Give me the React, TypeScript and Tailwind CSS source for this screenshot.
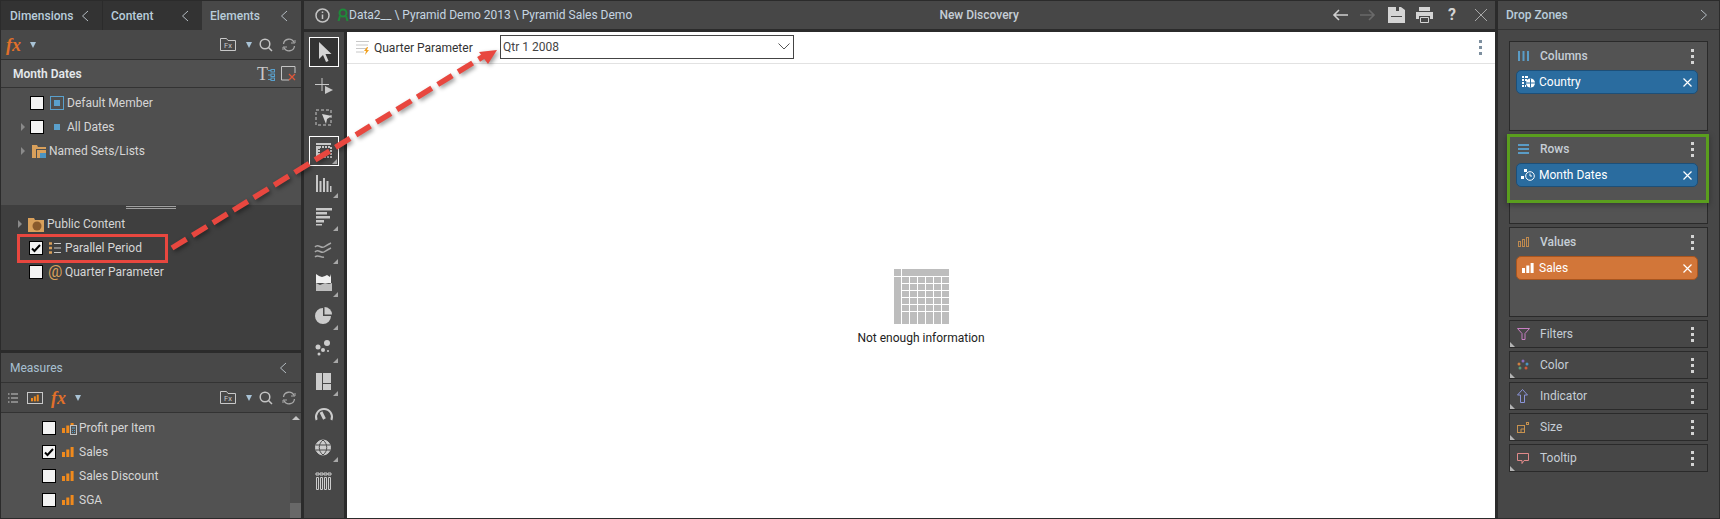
import type { ReactNode } from "react";

const Chevron = ({ right = false }: { right?: boolean }) => (
  <svg width="8" height="12" viewBox="0 0 8 12" fill="none" stroke="#b4bcc2" strokeWidth="1">
    <path d={right ? "M1 1l5.5 5L1 11" : "M7 1L1.5 6 7 11"} />
  </svg>
);

const Caret = () => <span className="block w-0 h-0 border-x-[3.5px] border-x-transparent border-t-[6px] border-t-[#a9c3d6]" />;

const TreeArrow = () => <span className="block w-0 h-0 border-y-[4px] border-y-transparent border-l-[4px] border-l-[#8a8a8a]" />;

const Check = ({ on = false }: { on?: boolean }) => (
  <span className="flex items-center justify-center w-[14px] h-[14px] shrink-0 bg-[#f2f2f2] border border-black">
    {on && (
      <svg width="10" height="10" viewBox="0 0 10 10" fill="none" stroke="#000" strokeWidth="2">
        <path d="M1 5.5l2.5 2.5L9 2" />
      </svg>
    )}
  </span>
);

const FolderFx = () => (
  <svg width="16" height="13" viewBox="0 0 16 13" fill="none" className="block">
    <path d="M.5 12.500V.5h6l1.500 2h7.500v10z" stroke="#c8c8c8" />
    <text x="4" y="10" fontSize="7.500" fill="#c8c8c8" fontFamily="Roboto, sans-serif">Fx</text>
  </svg>
);

const Search = () => (
  <svg width="14" height="14" viewBox="0 0 14 14" fill="none" stroke="#c4c4c4" strokeWidth="1.5">
    <circle cx="6" cy="6" r="4.8" />
    <path d="M9.5 9.5L13 13" />
  </svg>
);

const Refresh = () => (
  <svg width="14" height="14" viewBox="0 0 14 14" fill="none" stroke="#a8a8a8" strokeWidth="1.3">
    <path d="M1.500 6A5.500 5.500 0 0 1 12 4.500M12.500 8A5.500 5.500 0 0 1 2 9.500" />
    <path d="M9 5h4V2M5 9H1v3" strokeWidth="1" />
  </svg>
);

const Fx = () => (
  <span className="text-[18px] leading-none italic font-bold text-[#e0702a] [font-family:'Liberation_Serif',serif]">fx</span>
);

const Bars = ({ color = "#f08a1d", size = 12 }: { color?: string; size?: number }) => (
  <svg width={size} height={size} viewBox="0 0 12 12" fill={color}>
    <rect x="0" y="6" width="3" height="5" />
    <rect x="4.3" y="3.5" width="3" height="7.5" />
    <rect x="8.6" y="1" width="3" height="10" />
  </svg>
);

const ListIcon = ({ size = 12 }: { size?: number }) => (
  <svg width={size} height={size} viewBox="0 0 12 12" fill="none">
    <path d="M0 1.5h3M0 6h3M0 10.5h3" stroke="#d9a05b" strokeWidth="2.4" />
    <path d="M5 1.5h7M5 6h7M5 10.5h7" stroke="#c8c8c8" strokeWidth="1" />
  </svg>
);

function TreeRow({ pad, arrow, box, on, icon, iconW = 15, children }: { pad: number; arrow?: boolean; box?: boolean; on?: boolean; icon: ReactNode; iconW?: number; children: ReactNode }) {
  return (
    <div className="h-6 flex items-center text-[#d6d6d6]">
      <span className="shrink-0 flex justify-end" style={{ width: pad }}>{arrow && <TreeArrow />}</span>
      {box && <span className="ml-[5px]"><Check on={on} /></span>}
      <span className={`shrink-0 flex justify-center ${box ? "ml-[5px]" : "ml-[6px]"}`} style={{ width: iconW }}>{icon}</span>
      <span className="ml-[3px] whitespace-nowrap">{children}</span>
    </div>
  );
}

function LeftPanel() {
  return (
    <div className="w-[300px] shrink-0 flex flex-col">
      {/* tabs */}
      <div className="h-[29px] flex">
        <div className="w-[101px] bg-[#333333] flex items-center justify-between pl-[9px] pr-[13px] text-[#b9cddb] font-medium"><span>Dimensions</span><Chevron /></div>
        <div className="w-[99px] ml-px bg-[#333333] flex items-center justify-between pl-[8px] pr-[13px] text-[#b9cddb] font-medium"><span>Content</span><Chevron /></div>
        <div className="flex-1 bg-[#484848] flex items-center justify-between pl-[8px] pr-[13px] text-[#b9cddb] font-medium"><span>Elements</span><Chevron /></div>
      </div>
      <div className="h-[30px] bg-[#484848] border-b border-[#2e2e2e] flex items-center pl-[5px] pr-[5px]">
        <Fx />
        <span className="ml-[9px]"><Caret /></span>
        <span className="ml-auto"><FolderFx /></span>
        <span className="ml-[10px]"><Caret /></span>
        <span className="ml-[7px]"><Search /></span>
        <span className="ml-[9px]"><Refresh /></span>
      </div>
      <div className="h-[28px] bg-[#505050] border-b border-[#333333] flex items-center pl-[12px] pr-[5px]">
        <span className="font-semibold text-[#e4e8ec]">Month Dates</span>
        <span className="ml-auto text-[18px] leading-none text-[#c8c8c8] [font-family:'Liberation_Serif',serif]">T</span>
        <svg width="7" height="12" viewBox="0 0 7 12" fill="none" stroke="#5aa0cc" className="mt-[2px]"><path d="M0 1.5h3M0 6h3M0 10.5h3" /><rect x="3" y="0.5" width="3.5" height="2.5" /><rect x="3" y="5" width="3.5" height="2.5" /><rect x="3" y="9" width="3.5" height="2.5" /></svg>
        <svg width="15" height="15" viewBox="0 0 15 15" fill="none" className="ml-[6px]"><path d="M8 14H.5V.5h13.500V7" stroke="#c4c4c4" /><path d="M8 8l6 6M14 8l-6 6" stroke="#e0573a" strokeWidth="1.3" /></svg>
      </div>
      <div className="h-[117px] bg-[#4f4f4f] pt-[3px]">
        <TreeRow pad={24} box icon={<span className="flex items-center justify-center w-[14px] h-[14px] border border-[#5aa0cc]"><span className="w-[6px] h-[6px] bg-[#5aa0cc]" /></span>}>Default Member</TreeRow>
        <TreeRow pad={24} arrow box icon={<span className="block w-[6px] h-[6px] bg-[#5aa0cc]" />}>All Dates</TreeRow>
        <TreeRow pad={24} arrow icon={
          <svg width="14" height="13" viewBox="0 0 14 13"><path d="M0 0h5l1 2h8v2H4v9H0z" fill="#d9a05b" /><rect x="5" y="5" width="9" height="8" fill="#d9a05b" /><rect x="8" y="8" width="6" height="5" fill="#4a94c4" /></svg>
        }>Named Sets/Lists</TreeRow>
      </div>
      {/* splitter */}
      <div className="h-[5px] bg-[#3f3f3f] flex items-center justify-center"><span className="w-[50px] h-[3px] border-y border-[#a0a0a0]" /></div>
      <div className="h-[140px] bg-[#3f3f3f] pt-[2px]">
        <TreeRow pad={21} arrow iconW={16} icon={
          <svg width="16" height="15" viewBox="0 0 16 15"><path d="M0 1h6l1 2h9v12H0z" fill="#d9a05b" /><circle cx="9" cy="9" r="4.500" fill="#8a5a2c" /></svg>
        }>Public Content</TreeRow>
        <div className="h-6 flex items-center text-[#d6d6d6]">
          <span className="ml-[28px]"><Check on /></span>
          <span className="ml-[5px] w-[17px] pl-px"><ListIcon /></span>
          <span>Parallel Period</span>
        </div>
        <div className="h-6 flex items-center text-[#d6d6d6]">
          <span className="ml-[28px]"><Check /></span>
          <span className="ml-[5px] w-[17px] text-[16px] leading-none text-[#d9a05b]">@</span>
          <span>Quarter Parameter</span>
        </div>
      </div>
      <div className="h-[3px] bg-[#2b2b2b]" />
      <div className="h-[30px] bg-[#484848] border-b border-[#333333] flex items-center justify-between pl-[9px] pr-[14px] text-[#a9c0d2]">
        <span>Measures</span><Chevron />
      </div>
      <div className="h-[30px] bg-[#484848] border-b border-[#333333] flex items-center pl-[7px] pr-[5px]">
        <svg width="10" height="10" viewBox="0 0 10 10" stroke="#c8c8c8"><path d="M0 1h1.500M3 1h7M0 5h1.500M3 5h7M0 9h1.500M3 9h7" /></svg>
        <span className="ml-[9px] flex items-center justify-center w-[16px] h-[12px] border border-[#c8c8c8]"><Bars size={8} /></span>
        <span className="ml-[8px]"><Fx /></span>
        <span className="ml-[9px]"><Caret /></span>
        <span className="ml-auto"><FolderFx /></span>
        <span className="ml-[10px]"><Caret /></span>
        <span className="ml-[7px]"><Search /></span>
        <span className="ml-[9px]"><Refresh /></span>
      </div>
      <div className="flex-1 bg-[#525252] flex min-h-0">
        <div className="flex-1 pt-[3px]">
          {[
            { name: "Profit per Item", on: false, extra: true },
            { name: "Sales", on: true, extra: false },
            { name: "Sales Discount", on: false, extra: false },
            { name: "SGA", on: false, extra: false },
          ].map((m) => (
            <div key={m.name} className="h-6 flex items-center text-[#d6d6d6]">
              <span className="ml-[41px]"><Check on={m.on} /></span>
              <span className="ml-[6px] w-[12px] relative">
                <Bars />
                {m.extra && (
                  <svg width="7" height="10" viewBox="0 0 7 10" fill="none" className="absolute left-[8px] top-[3px] bg-[#525252]"><rect x=".5" y=".5" width="6" height="9" stroke="#c4c4c4" /><path d="M2 3h3M2 5.500h1M4 5.500h1M2 7.500h1M4 7.500h1" stroke="#5aa0cc" /></svg>
                )}
              </span>
              <span className="ml-[5px]">{m.name}</span>
            </div>
          ))}
        </div>
        <div className="w-[11px] bg-[#4c4c4c] flex flex-col items-center justify-between pt-[3px]">
          <span className="block w-0 h-0 border-x-[4px] border-x-transparent border-b-[4px] border-b-[#c4c4c4]" />
          <span className="block w-full h-[15px] bg-[#686868]" />
        </div>
      </div>
    </div>
  );
}

const toolIcons: ReactNode[] = [
  <path key="a" d="M8 3v17l4-4 3 7 2.500-1-3-7h6z" fill="#d4d4d4" />,
  <g key="b" fill="none" stroke="#c8c8c8"><path d="M11 6v13M4 12.500h14" /><path d="M14 14l8 4-8 4z" fill="#c8c8c8" stroke="none" /></g>,
  <g key="c"><rect x="5" y="5" width="15" height="15" fill="none" stroke="#c8c8c8" strokeDasharray="3 2" /><path d="M11 9l10 2-5 3-1 5z" fill="#d4d4d4" /></g>,
  <g key="d" fill="#c8c8c8"><path d="M5 5h15v2H5zM5 8h2v12H5z" /><path d="M8 9h12v10H8z" fill="none" stroke="#c8c8c8" strokeDasharray="2 1" strokeWidth="2" /></g>,
  <g key="e" fill="#c8c8c8"><rect x="5" y="4" width="2" height="17" /><rect x="8.500" y="10" width="2" height="11" /><rect x="12" y="7" width="2" height="14" /><rect x="15.500" y="10" width="2" height="11" /><rect x="19" y="15" width="1.500" height="6" /></g>,
  <g key="f" fill="#c8c8c8"><rect x="5" y="4" width="16" height="2.500" /><rect x="5" y="8" width="11" height="2.500" /><rect x="5" y="12" width="14" height="2.500" /><rect x="5" y="16" width="8" height="2.500" /><rect x="5" y="20" width="6" height="1.500" /></g>,
  <g key="g" fill="none" stroke="#a8a8a8" strokeWidth="1.500"><path d="M4 10c3-4 6 2 9 0s5-3 7-4" /><path d="M4 15c3-4 6 2 9 0s5-3 7-4" /><path d="M4 20c3-3 6 1 9 0" /></g>,
  <g key="h"><path d="M5 4l3 2 3 1 3-1 2-1 3 2 1-3v9H5z" fill="#f0f0f0" /><path d="M5 13l4 2 5-2 4 1 3-1v8H5z" fill="#bdbdbd" /></g>,
  <g key="i" fill="#cccccc"><path d="M12 5a8 8 0 1 0 8 8h-8z" /><path d="M13.500 4v7.500H21A7.500 7.500 0 0 0 13.500 4z" /></g>,
  <g key="j" fill="#cccccc"><circle cx="7" cy="11" r="2.500" /><circle cx="16" cy="7" r="3" /><circle cx="12" cy="14" r="2" /><circle cx="8" cy="18" r="1.500" /><circle cx="17" cy="15" r="1" /></g>,
  <g key="k" fill="#cccccc"><rect x="5" y="4" width="6" height="17" /><rect x="12" y="4" width="8" height="10" /><rect x="12" y="15" width="8" height="6" /></g>,
  <g key="l" fill="none" stroke="#cccccc"><path d="M5.600 18A8 8 0 1 1 20.400 18" strokeWidth="2" /><path d="M10 10l3.500 7" strokeWidth="3" /></g>,
  <g key="m" fill="none" stroke="#cccccc"><circle cx="12" cy="12.500" r="7.500" fill="#cccccc" /><path d="M12 5c-5 4-5 11 0 15M12 5c5 4 5 11 0 15M4.500 10h15M4.500 15h15" stroke="#484848" /></g>,
  <g key="n" fill="none" stroke="#cccccc"><path d="M5.500 9.500v12h2v-12zM9.500 9.500v12h2v-12zM13.500 9.500v12h2v-12zM17.500 9.500v12h2v-12z" /><path d="M5 5h3v2H5zM9 5h3v2H9zM13 5h3v2h-3zM17 5h3v2h-3z" /></g>,
];

function ToolRail() {
  return (
    <div className="w-[40px] shrink-0 bg-[#474747] flex flex-col items-center pt-[5px]">
      {toolIcons.map((icon, i) => (
        <div key={i} className={`relative w-[30px] h-[30px] mb-[3px] flex items-center justify-center ${i === 0 ? "border border-white bg-[#333333]" : i === 3 ? "border border-white" : ""}`}>
          <svg width="26" height="26" viewBox="0 0 26 26">{icon}</svg>
          {i > 2 && i !== 11 && i !== 13 && (
            <span className="absolute right-[1px] bottom-[1px] w-0 h-0 border-l-[5px] border-l-transparent border-b-[5px] border-b-[#a8a8a8]" />
          )}
        </div>
      ))}
    </div>
  );
}

function Canvas() {
  return (
    <div className="flex-1 bg-white flex flex-col">
      <div className="h-[32px] border-b border-[#e2e2e2] flex items-center pl-[9px] pr-[13px] text-[#333333]">
        <svg width="14" height="15" viewBox="0 0 14 15" className="shrink-0">
          <path d="M0 1.500h13M0 5h12M0 8.500h10M0 12h8" stroke="#c8c8c8" />
          <path d="M11 7l-3 4h2l-1 4 4-5h-2l1-3z" fill="#f0a020" />
        </svg>
        <span className="ml-[4px] w-[126px]">Quarter Parameter</span>
        <div className="w-[294px] h-[24px] border border-[#444444] flex items-center justify-between pl-[2px] pr-[3px] -mt-[2px] text-[#444444]">
          <span>Qtr 1 2008</span>
          <svg width="12" height="7" viewBox="0 0 12 7" fill="none" stroke="#555555"><path d="M.5.5L6 6 11.500.5" /></svg>
        </div>
        <div className="ml-auto flex flex-col gap-[3px]">
          <span className="w-[3px] h-[3px] bg-[#7d8f9f]" />
          <span className="w-[3px] h-[3px] bg-[#7d8f9f]" />
          <span className="w-[3px] h-[3px] bg-[#7d8f9f]" />
        </div>
      </div>
      <div className="flex-1 flex flex-col items-center pt-[205px]">
        <svg width="55" height="55" viewBox="0 0 55 55" fill="#bdbdbd">
          <rect x="0" y="0" width="7" height="7" />
          <rect x="8" y="0" width="47" height="7" />
          <rect x="0" y="8" width="7" height="47" />
          {[8, 15, 22, 29, 36, 43, 49].map((y) =>
            [8, 16, 24, 32, 40, 48].map((x) => <rect key={`${x}-${y}`} x={x} y={y} width="7" height="6" />)
          )}
        </svg>
        <span className="mt-[8px] text-[#222222]">Not enough information</span>
      </div>
    </div>
  );
}

const Dots = ({ color = "#d4d4d4" }: { color?: string }) => (
  <div className="flex flex-col gap-[3px]">
    <span className="w-[3px] h-[3px]" style={{ background: color }} />
    <span className="w-[3px] h-[3px]" style={{ background: color }} />
    <span className="w-[3px] h-[3px]" style={{ background: color }} />
  </div>
);

function Pill({ icon, label, orange }: { icon: ReactNode; label: string; orange?: boolean }) {
  return (
    <div className={`ml-[6px] mr-[9px] h-[24px] rounded-[5px] border flex items-center pl-[4px] pr-[4px] text-white ${orange ? "bg-[#d27639] border-[#a8551f]" : "bg-[#2a6c9f] border-[#1d4f78]"}`}>
      <span className="w-[14px] flex justify-center">{icon}</span>
      <span className="ml-[4px]">{label}</span>
      <svg width="9" height="9" viewBox="0 0 9 9" stroke="#ffffff" strokeWidth="1.2" className="ml-auto mr-px"><path d="M.5.5l8 8M8.500.5l-8 8" /></svg>
    </div>
  );
}

function Zone({ icon, title, pill }: { icon: ReactNode; title: string; pill: ReactNode }) {
  return (
    <div className="h-[90px] bg-[#535353] border border-[#2a2a2a]">
      <div className="h-[28px] flex items-center pr-[13px]">
        <span className="w-[30px] pl-[8px] shrink-0">{icon}</span>
        <span className="font-medium text-[#c6ced6]">{title}</span>
        <span className="ml-auto"><Dots /></span>
      </div>
      {pill}
    </div>
  );
}

function MiniZone({ icon, title }: { icon: ReactNode; title: string }) {
  return (
    <div className="relative h-[28px] bg-[#474747] border border-[#2a2a2a] flex items-center pr-[13px]">
      <span className="w-[30px] pl-[7px] shrink-0">{icon}</span>
      <span className="text-[#c6ced6]">{title}</span>
      <span className="ml-auto"><Dots /></span>
      <span className="absolute left-0 bottom-0 w-0 h-0 border-r-[5px] border-r-transparent border-b-[5px] border-b-[#b4b4b4]" />
    </div>
  );
}

function DropZones() {
  return (
    <div className="w-[221px] shrink-0 bg-[#474747] flex flex-col">
      <div className="h-[29px] border-b border-[#333333] flex items-center justify-between pl-[8px] pr-[11px]">
        <span className="font-medium text-[#b9cddb]">Drop Zones</span>
        <Chevron right />
      </div>
      <div className="flex flex-col gap-[3px] pt-[11px] pl-[11px] pr-[11px]">
        <Zone
          title="Columns"
          icon={<svg width="11" height="10" viewBox="0 0 11 10" fill="#5a9cc6"><rect width="2" height="10" /><rect x="4.500" width="2" height="10" /><rect x="9" width="2" height="10" /></svg>}
          pill={<Pill label="Country" icon={
            <svg width="13" height="12" viewBox="0 0 13 12" fill="#ffffff"><path d="M0 0h2v2H0zM3 0h3v2H3zM0 3h2v2H0zM3 3h2v2H3zM0 6h2v2H0zM0 9h2v2H0zM3 9h1v2H3z" /><circle cx="8.500" cy="7" r="4.500" /><path d="M4 7h9M8.500 2.500v9" stroke="#2a6c9f" /></svg>
          } />}
        />
        <Zone
          title="Rows"
          icon={<svg width="11" height="10" viewBox="0 0 11 10" fill="#5a9cc6"><rect width="11" height="2" /><rect y="4" width="11" height="2" /><rect y="8" width="11" height="2" /></svg>}
          pill={<Pill label="Month Dates" icon={
            <svg width="14" height="12" viewBox="0 0 14 12" fill="none"><path d="M3 0h3v3H3zM0 7h3v3H0z" fill="#ffffff" /><circle cx="9" cy="7" r="4.300" stroke="#ffffff" /><path d="M9 4.500V7h2" stroke="#ffffff" /></svg>
          } />}
        />
        <Zone
          title="Values"
          icon={<svg width="11" height="10" viewBox="0 0 11 10" fill="none" stroke="#c08a4e"><rect x=".5" y="4.500" width="2" height="5" /><rect x="4.500" y="2.500" width="2" height="7" /><rect x="8.500" y=".5" width="2" height="9" /></svg>}
          pill={<Pill orange label="Sales" icon={<Bars color="#ffffff" />} />}
        />
        <MiniZone title="Filters" icon={<svg width="13" height="12" viewBox="0 0 13 12" fill="none" stroke="#c77fc2"><path d="M.5.5h12L8 5.500v6h-3v-6z" /></svg>} />
        <MiniZone title="Color" icon={
          <svg width="12" height="12" viewBox="0 0 12 12"><circle cx="6" cy="2" r="1.500" fill="#8a6cc0" /><circle cx="2" cy="5" r="1.500" fill="#d08040" /><circle cx="10" cy="5" r="1.500" fill="#4a94c4" /><circle cx="3" cy="9" r="1.500" fill="#5a9a7a" /><circle cx="9" cy="9" r="1.500" fill="#d05a3a" /></svg>
        } />
        <MiniZone title="Indicator" icon={<svg width="11" height="14" viewBox="0 0 11 14" fill="none" stroke="#8a94d8"><path d="M5.500.5L.5 6h3v7.500h4V6h3z" /></svg>} />
        <MiniZone title="Size" icon={<svg width="12" height="11" viewBox="0 0 12 11" fill="none" stroke="#c8924e"><rect x=".5" y="3.500" width="7" height="7" /><path d="M4 7h3.500M4 7v3.500" /><rect x="9.500" y=".5" width="2" height="2" /></svg>} />
        <MiniZone title="Tooltip" icon={<svg width="12" height="11" viewBox="0 0 12 11" fill="none" stroke="#e08a8a"><path d="M.5.5h11v7H7L5 10.500V7.500H.5z" /></svg>} />
      </div>
    </div>
  );
}

function TopBar() {
  return (
    <div className="h-[28px] bg-[#474747] flex items-center justify-between pl-[11px] pr-[8px]">
      <div className="flex items-center">
        <svg width="15" height="15" viewBox="0 0 15 15" fill="none" stroke="#c4c4c4" strokeWidth="1.500"><circle cx="7.500" cy="7.500" r="6.500" /><path d="M7.500 6.500V11M7.500 3.500v1.500" /></svg>
        <svg width="12" height="14" viewBox="0 0 12 14" fill="none" stroke="#1f8a3a" strokeWidth="2" className="ml-[7px]"><circle cx="6" cy="5" r="3.500" /><path d="M3 8l-1.500 5M9 8l1.500 5" /></svg>
        <span className="text-[#c6d6e2]">Data2__ \ Pyramid Demo 2013 \ Pyramid Sales Demo</span>
      </div>
      <span className="-ml-[6px] font-medium text-[#c6ced6]">New Discovery</span>
      <div className="flex items-center">
        <svg width="16" height="12" viewBox="0 0 16 12" fill="none" stroke="#d0d0d0" strokeWidth="1.600"><path d="M16 6H2M7 1L2 6l5 5" /></svg>
        <svg width="16" height="12" viewBox="0 0 16 12" fill="none" stroke="#6a6a6a" strokeWidth="1.600" className="ml-[12px]"><path d="M0 6h14M9 1l5 5-5 5" /></svg>
        <svg width="17" height="16" viewBox="0 0 17 16" fill="#d4d4d4" className="ml-[12px]"><path d="M0 0h13l4 3v13H0zM8 0v4h3V0z" fillRule="evenodd" /><rect x="3" y="9" width="11" height="1" fill="#474747" /></svg>
        <svg width="17" height="16" viewBox="0 0 17 16" fill="#d4d4d4" className="ml-[11px]"><path d="M3 0h11v4H3zM0 5h17v7h-3V9H3v3H0z" /><path d="M4.500 10.500h8v5h-8z" fill="none" stroke="#d4d4d4" /></svg>
        <span className="ml-[15px] w-[10px] font-bold text-[16px] leading-none text-[#d4d4d4]">?</span>
        <svg width="12" height="12" viewBox="0 0 12 12" stroke="#a8a8a8" className="ml-[17px]"><path d="M0 0l12 12M12 0L0 12" /></svg>
      </div>
    </div>
  );
}

// red callout and arrow plus the green highlight sit on top of the app
function Annotations() {
  return (
    <>
      <div className="absolute left-[17px] top-[234px] w-[151px] h-[29px] border-[3px] border-[#e8473f]" />
      <div className="absolute left-[1507px] top-[134px] w-[202px] h-[69px] border-[3px] border-[#5a9e1e] shadow-[0_2px_6px_rgba(0,0,0,0.35)]" />
      <svg width="1720" height="519" viewBox="0 0 1720 519" fill="none" className="absolute left-0 top-0 pointer-events-none drop-shadow-[2px_2px_2px_rgba(0,0,0,0.4)]">
        <path d="M172 248L484 56" stroke="#e8473f" strokeWidth="5.500" strokeDasharray="17 7" />
        <path d="M497 50L479 52L488 64z" fill="#e8473f" />
      </svg>
    </>
  );
}

export default function App() {
  return (
    <div className="relative w-[1720px] h-[519px] overflow-hidden bg-[#2b2b2b] flex gap-[3px] pl-px pr-px pt-px pb-px text-[12px] leading-none [font-family:Roboto,sans-serif]">
      <LeftPanel />
      <div className="flex-1 flex flex-col min-w-0">
        <TopBar />
        <div className="flex-1 flex gap-[3px] mt-[3px] min-h-0">
          <ToolRail />
          <Canvas />
        </div>
      </div>
      <DropZones />
      <Annotations />
    </div>
  );
}
